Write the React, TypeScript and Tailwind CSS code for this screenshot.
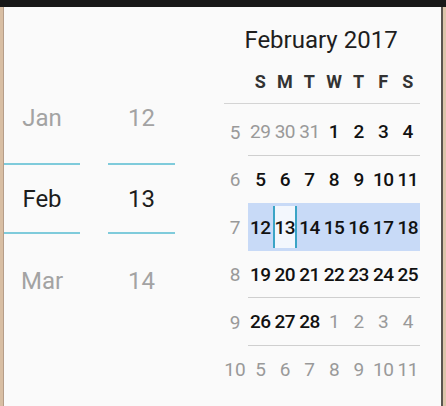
import React from "react";

type Cell = { d: number; cur: boolean };

const weeks: { wk: number; days: Cell[] }[] = [
  { wk: 5, days: [29, 30, 31, 1, 2, 3, 4].map((d, i) => ({ d, cur: i >= 3 })) },
  { wk: 6, days: [5, 6, 7, 8, 9, 10, 11].map((d) => ({ d, cur: true })) },
  { wk: 7, days: [12, 13, 14, 15, 16, 17, 18].map((d) => ({ d, cur: true })) },
  { wk: 8, days: [19, 20, 21, 22, 23, 24, 25].map((d) => ({ d, cur: true })) },
  { wk: 9, days: [26, 27, 28, 1, 2, 3, 4].map((d, i) => ({ d, cur: i < 3 })) },
  { wk: 10, days: [5, 6, 7, 8, 9, 10, 11].map((d) => ({ d, cur: false })) },
];

const rowHeights = ["h-[48px]", "h-[47px]", "h-[48px]", "h-[47px]", "h-[48px]", "h-[47px]"];
const rowLines = [true, false, false, true, true, false];

function Spinner({ top, mid, bot, width }: { top: string; mid: string; bot: string; width: string }) {
  return (
    <div className={`flex flex-col ${width}`}>
      <div className="h-[86px]" />
      <div className="h-[50px] flex items-center justify-center text-[24px] leading-none text-[#a3a3a3]">{top}</div>
      <div className="h-[20px]" />
      <div className="h-[2px] bg-[#7fcbdb]" />
      <div className="h-[67px] flex items-center justify-center text-[24px] leading-none text-[#1c1c1c]">{mid}</div>
      <div className="h-[2px] bg-[#7fcbdb]" />
      <div className="h-[22px]" />
      <div className="h-[50px] flex items-center justify-center text-[24px] leading-none text-[#a3a3a3]">{bot}</div>
    </div>
  );
}

export default function App() {
  return (
    <div className="w-[446px] h-[406px] bg-[#dcc4aa] flex flex-col font-['Roboto',sans-serif] overflow-hidden">
      <div className="h-[7px] bg-[#181818] shrink-0" />
      <div className="flex flex-1">
        <div className="w-[3px] bg-[#d8bea3]" />
        <div className="w-[1px] bg-[#b59d88]" />
        <div className="flex-1 bg-[#fafafa] flex">
          <Spinner top="Jan" mid="Feb" bot="Mar" width="w-[76px]" />
          <div className="w-[28px]" />
          <Spinner top="12" mid="13" bot="14" width="w-[67px]" />
          <div className="w-[47px]" />
          <div className="w-[198px] flex flex-col">
            <div className="h-[19px]" />
            <div className="h-[28px] flex items-center justify-center text-[24px] leading-none text-[#1e1e1e]">
              February 2017
            </div>
            <div className="h-[16px]" />
            <div className="h-[24px] flex">
              <div className="w-[26px]" />
              <div className="flex-1 flex">
                {["S", "M", "T", "W", "T", "F", "S"].map((l, i) => (
                  <div key={i} className="flex-1 flex items-center justify-center text-[18px] font-bold leading-none text-[#333333]">
                    {l}
                  </div>
                ))}
              </div>
            </div>
            <div className="h-[9px]" />
            <div className="h-[1px] bg-[#d4d4d4] ml-[2px]" />
            <div className="h-[4px]" />
            {weeks.map((w, ri) => {
              const hl = w.wk === 7;
              return (
                <div key={w.wk} className={`flex ${rowHeights[ri]}`}>
                  <div className="w-[26px] flex items-center justify-center text-[19px] leading-none text-[#999999]">
                    {w.wk}
                  </div>
                  <div
                    className={`flex-1 flex ${hl ? "bg-[#c8daf7]" : ""} ${
                      rowLines[ri] ? "border-b border-[#cfcfcf]" : ""
                    }`}
                  >
                    {w.days.map((c, ci) => {
                      const sel = hl && c.d === 13;
                      return (
                        <div
                          key={ci}
                          className={`flex-1 flex items-center justify-center text-[19px] leading-none tracking-[-0.5px] ${
                            c.cur ? "font-medium text-[#111111]" : "text-[#999999]"
                          }`}
                        >
                          {sel ? (
                            <div className="w-full h-[42px] flex items-center justify-center bg-[#f3f7fd] border-x-2 border-[#3aa4c6]">
                              {c.d}
                            </div>
                          ) : (
                            c.d
                          )}
                        </div>
                      );
                    })}
                  </div>
                </div>
              );
            })}
          </div>
        </div>
        <div className="w-[2px] bg-[#5b5550]" />
        <div className="w-[3px] bg-[#dcc4aa]" />
      </div>
    </div>
  );
}
